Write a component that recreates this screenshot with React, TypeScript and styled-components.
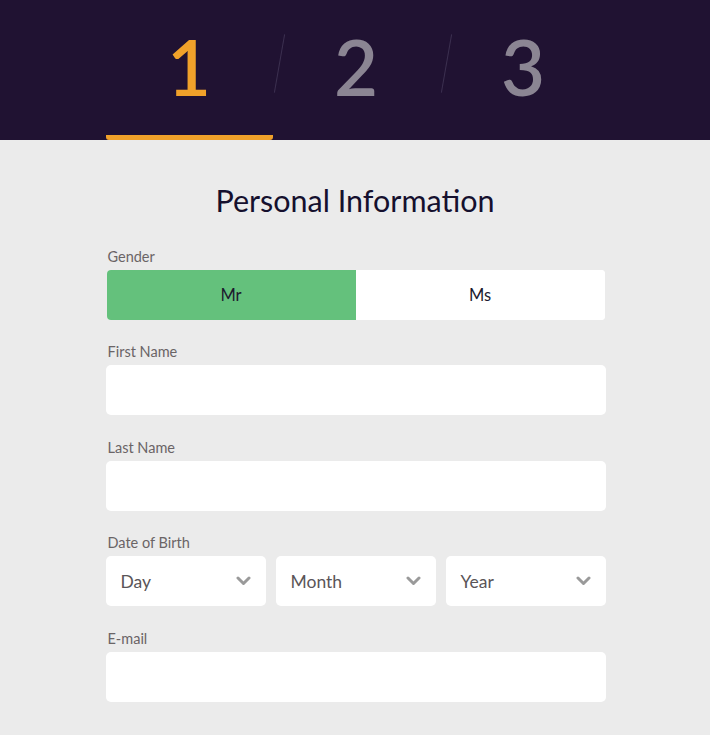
import React, { useState } from 'react';
import styled, { createGlobalStyle } from 'styled-components';

const GlobalStyle = createGlobalStyle`
  html, body {
    margin: 0;
    padding: 0;
    background: #ebebeb;
    font-family: 'Lato', 'Noto Sans', sans-serif;
  }
`;

const steps = ['1', '2', '3'];

const App: React.FC = () => {
  const [gender, setGender] = useState<'Mr' | 'Ms'>('Mr');

  return (
    <>
      <GlobalStyle />
      <Header>
        <StepRow>
          {steps.map((s, i) => (
            <Step key={s} active={i === 0} first={i === 0}>
              <StepNumber active={i === 0}>{s}</StepNumber>
            </Step>
          ))}
        </StepRow>
      </Header>

      <Main>
        <Title>Personal Information</Title>

        <Field>
          <Label>Gender</Label>
          <Toggle>
            <ToggleOption selected={gender === 'Mr'} onClick={() => setGender('Mr')}>
              Mr
            </ToggleOption>
            <ToggleOption selected={gender === 'Ms'} onClick={() => setGender('Ms')}>
              Ms
            </ToggleOption>
          </Toggle>
        </Field>

        <Field>
          <Label>First Name</Label>
          <Input type="text" />
        </Field>

        <Field>
          <Label>Last Name</Label>
          <Input type="text" />
        </Field>

        <Field>
          <Label>Date of Birth</Label>
          <SelectRow>
            {['Day', 'Month', 'Year'].map((p) => (
              <SelectBox key={p}>
                <span>{p}</span>
                <Chevron />
              </SelectBox>
            ))}
          </SelectRow>
        </Field>

        <Field>
          <Label>E-mail</Label>
          <Input type="email" />
        </Field>
      </Main>
    </>
  );
};

const Chevron: React.FC = () => (
  <svg width="15" height="10" viewBox="0 0 15 10">
    <path d="M2 2 L7.5 7.5 L13 2" fill="none" stroke="#9a9a9a" strokeWidth="3" strokeLinecap="round" strokeLinejoin="round" />
  </svg>
);

const Header = styled.header`
  background: #201232;
  height: 140px;
  display: flex;
  justify-content: center;
`;

const StepRow = styled.div`
  width: 501px;
  display: grid;
  grid-template-columns: repeat(3, 1fr);
  margin-left: 2px;
`;

const Step = styled.div<{ active: boolean; first: boolean }>`
  position: relative;
  display: flex;
  align-items: center;
  justify-content: center;
  padding-bottom: 4px;
  border-bottom: 5px solid ${(p) => (p.active ? '#f0a12a' : 'transparent')};
  border-radius: 0 0 3px 3px;

  &::before {
    content: '';
    display: ${(p) => (p.first ? 'none' : 'block')};
    position: absolute;
    left: 6px;
    top: 34px;
    width: 1px;
    height: 59px;
    background: #3b3050;
    transform: rotate(10deg);
  }
`;

const StepNumber = styled.span<{ active: boolean }>`
  font-family: 'Lato', 'Noto Sans', sans-serif;
  font-size: 76px;
  font-weight: 600;
  line-height: 1;
  color: ${(p) => (p.active ? '#f0a12a' : '#8b8593')};
  margin-top: 2px;
`;

const Main = styled.main`
  width: 501px;
  margin: 0 auto;
  padding: 40px 0 40px;
  display: flex;
  flex-direction: column;
  gap: 23.5px;
`;

const Title = styled.h1`
  margin: 0 0 4px;
  font-size: 30.5px;
  font-weight: 400;
  line-height: 40px;
  color: #15102e;
  text-align: center;
`;

const Field = styled.div`
  display: flex;
  flex-direction: column;
  margin-left: 1px;
`;

const Label = styled.label`
  font-size: 14.5px;
  line-height: 18px;
  color: #6a6466;
  margin: 0 0 4px 2px;
`;

const Toggle = styled.div`
  display: grid;
  grid-template-columns: 1fr 1fr;
  height: 50px;
  border-radius: 4px;
  overflow: hidden;
  background: #fff;
  margin: 0 1px;
`;

const ToggleOption = styled.button<{ selected: boolean }>`
  border: none;
  font-family: inherit;
  font-size: 16.5px;
  color: #1c1a2e;
  background: ${(p) => (p.selected ? '#64c17c' : '#ffffff')};
  cursor: pointer;
`;

const Input = styled.input`
  height: 50px;
  box-sizing: border-box;
  border: none;
  border-radius: 5px;
  background: #fff;
  padding: 0 15px;
  font-family: inherit;
  font-size: 16px;
  outline: none;
`;

const SelectRow = styled.div`
  display: grid;
  grid-template-columns: repeat(3, 1fr);
  gap: 10px;
`;

const SelectBox = styled.div`
  height: 50px;
  box-sizing: border-box;
  background: #fff;
  border-radius: 5px;
  padding: 0 15px 0 15px;
  display: flex;
  align-items: center;
  justify-content: space-between;
  font-size: 17.5px;
  color: #5a5558;
`;

export default App;
